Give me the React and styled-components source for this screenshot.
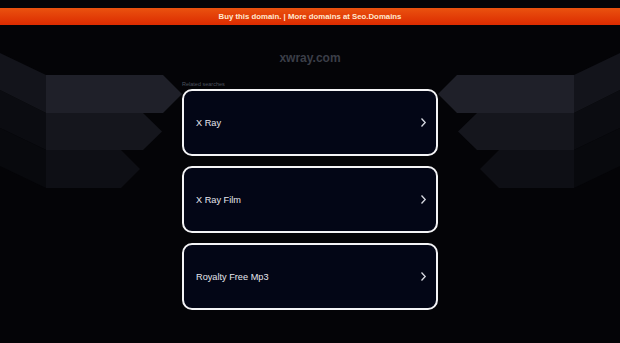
import React from 'react';
import styled, { createGlobalStyle } from 'styled-components';

const GlobalStyle = createGlobalStyle`
  html, body {
    margin: 0;
    padding: 0;
    background: #040407;
    font-family: "Liberation Sans", Arial, sans-serif;
  }
`;

const Page = styled.div`
  position: relative;
  width: 620px;
  height: 343px;
  overflow: hidden;
  background: #040407;
  padding-top: 8px;
  box-sizing: border-box;
`;

const Banner = styled.div`
  position: relative;
  z-index: 1;
  height: 17px;
  display: flex;
  align-items: center;
  justify-content: center;
  background: linear-gradient(#ea520f, #dc2b00);
  color: #ffe9cf;
  font-size: 7.8px;
  font-weight: bold;
`;

const Wings = styled.svg`
  position: absolute;
  left: 0;
  top: 0;
  z-index: 0;
`;

const Main = styled.main`
  position: relative;
  z-index: 1;
  width: 256px;
  margin: 0 auto;
  display: flex;
  flex-direction: column;
`;

const Title = styled.h1`
  margin: 26px 0 0;
  text-align: center;
  color: #3b3e47;
  font-size: 12px;
  font-weight: bold;
  line-height: 14px;
`;

const Label = styled.div`
  margin-top: 16px;
  color: #4d525e;
  font-size: 5.5px;
  line-height: 7px;
`;

const List = styled.div`
  margin-top: 1px;
  display: flex;
  flex-direction: column;
  gap: 10px;
`;

const Card = styled.a`
  height: 67px;
  box-sizing: border-box;
  border: 2px solid #f4f4f6;
  border-radius: 10px;
  background: #030616;
  display: flex;
  align-items: center;
  justify-content: space-between;
  padding: 0 9px 0 12px;
  color: #e6e7ee;
  font-size: 9.2px;
  text-decoration: none;
`;

const Chevron = () => (
  <svg width="7" height="11" viewBox="0 0 7 11">
    <path d="M1.5 1.5 L5.2 5.5 L1.5 9.5" fill="none" stroke="#d8dae2" strokeWidth="1.3" />
  </svg>
);

const left = [
  { band: '46,75 163,75 182,94 163,113 46,113', panel: '0,53 46,75 46,113 0,90', b: '#1f2029', p: '#13141b' },
  { band: '46,113 143,113 162,131.5 143,150 46,150', panel: '0,90 46,113 46,150 0,128', b: '#15161d', p: '#0b0c11' },
  { band: '46,150 121,150 140,169 121,188 46,188', panel: '0,128 46,150 46,188 0,166', b: '#0e0f15', p: '#08090d' },
];

const searches = ['X Ray', 'X Ray Film', 'Royalty Free Mp3'];

export default function App() {
  return (
    <Page>
      <GlobalStyle />
      <Wings width="620" height="343" viewBox="0 0 620 343">
        {left.map((s, i) => (
          <g key={i}>
            <polygon points={s.panel} fill={s.p} />
            <polygon points={s.band} fill={s.b} />
            <g transform="translate(620 0) scale(-1 1)">
              <polygon points={s.panel} fill={s.p} />
              <polygon points={s.band} fill={s.b} />
            </g>
          </g>
        ))}
      </Wings>
      <Banner>Buy this domain. | More domains at Seo.Domains</Banner>
      <Main>
        <Title>xwray.com</Title>
        <Label>Related searches</Label>
        <List>
          {searches.map((s) => (
            <Card key={s} href="#">
              {s}
              <Chevron />
            </Card>
          ))}
        </List>
      </Main>
    </Page>
  );
}
